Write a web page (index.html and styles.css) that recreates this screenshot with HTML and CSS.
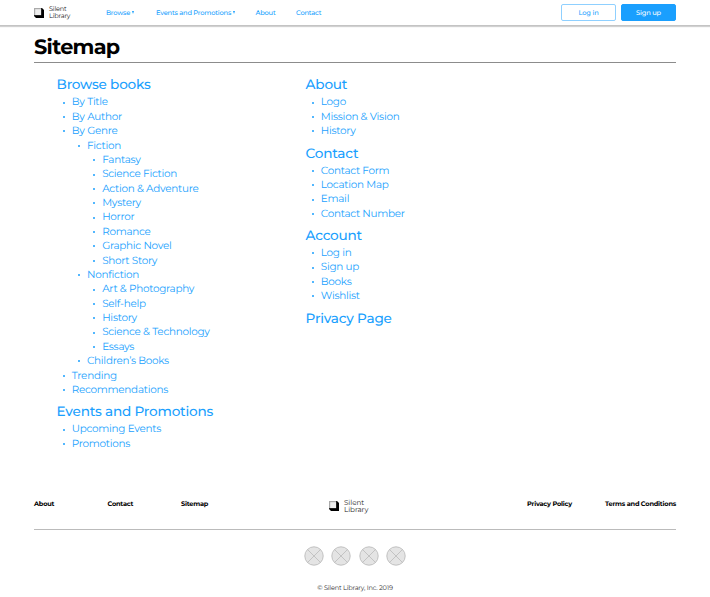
FILE: index.html
```html
<!DOCTYPE html>
<html lang="en">
<head>
<meta charset="utf-8">
<title>Sitemap – Silent Library</title>
<link rel="stylesheet" href="styles.css">
</head>
<body>
<header class="topbar">
  <a class="brand">
    <svg class="mark" viewBox="0 0 10 10"><path d="M0 0H8L10 2V10H2L0 8Z" fill="#000"/><path d="M0 0H7.2V7.2H0Z" fill="#aaa"/><path d="M1.2 1.2H7V7H1.2Z" fill="#eee"/></svg>
    <span>Silent<br>Library</span>
  </a>
  <nav class="menu">
    <a class="browse">Browse <i class="caret"></i></a>
    <a class="events">Events and Promotions <i class="caret"></i></a>
    <a class="about">About</a>
    <a>Contact</a>
  </nav>
  <div class="actions">
    <a class="button">Log in</a>
    <a class="button primary">Sign up</a>
  </div>
</header>
<main>
  <h1>Sitemap</h1>
  <div class="columns">
    <div class="column">
      <h2>Browse books</h2>
      <ul>
        <li>By Title</li>
        <li>By Author</li>
        <li>By Genre
          <ul>
            <li>Fiction
              <ul>
                <li>Fantasy</li>
                <li>Science Fiction</li>
                <li>Action &amp; Adventure</li>
                <li>Mystery</li>
                <li>Horror</li>
                <li>Romance</li>
                <li>Graphic Novel</li>
                <li>Short Story</li>
              </ul>
            </li>
            <li>Nonfiction
              <ul>
                <li>Art &amp; Photography</li>
                <li>Self-help</li>
                <li>History</li>
                <li>Science &amp; Technology</li>
                <li>Essays</li>
              </ul>
            </li>
            <li>Children’s Books</li>
          </ul>
        </li>
        <li>Trending</li>
        <li>Recommendations</li>
      </ul>
      <h2>Events and Promotions</h2>
      <ul>
        <li>Upcoming Events</li>
        <li>Promotions</li>
      </ul>
    </div>
    <div class="column">
      <h2>About</h2>
      <ul>
        <li>Logo</li>
        <li>Mission &amp; Vision</li>
        <li>History</li>
      </ul>
      <h2>Contact</h2>
      <ul>
        <li>Contact Form</li>
        <li>Location Map</li>
        <li>Email</li>
        <li>Contact Number</li>
      </ul>
      <h2>Account</h2>
      <ul>
        <li>Log in</li>
        <li>Sign up</li>
        <li>Books</li>
        <li>Wishlist</li>
      </ul>
      <h2>Privacy Page</h2>
    </div>
  </div>
</main>
<footer>
  <div class="footer-row">
    <nav class="footer-left"><a>About</a><a>Contact</a><a>Sitemap</a></nav>
    <a class="brand footer-brand">
      <svg class="mark" viewBox="0 0 10 10"><path d="M0 0H8L10 2V10H2L0 8Z" fill="#000"/><path d="M0 0H7.2V7.2H0Z" fill="#aaa"/><path d="M1.2 1.2H7V7H1.2Z" fill="#eee"/></svg>
      <span>Silent<br>Library</span>
    </a>
    <nav class="footer-right"><a>Privacy Policy</a><a>Terms and Conditions</a></nav>
  </div>
  <div class="social">
    <svg viewBox="0 0 20 20"><circle cx="10" cy="10" r="9.2"/><path d="M3.5 3.5L16.5 16.5M16.5 3.5L3.5 16.5"/></svg>
    <svg viewBox="0 0 20 20"><circle cx="10" cy="10" r="9.2"/><path d="M3.5 3.5L16.5 16.5M16.5 3.5L3.5 16.5"/></svg>
    <svg viewBox="0 0 20 20"><circle cx="10" cy="10" r="9.2"/><path d="M3.5 3.5L16.5 16.5M16.5 3.5L3.5 16.5"/></svg>
    <svg viewBox="0 0 20 20"><circle cx="10" cy="10" r="9.2"/><path d="M3.5 3.5L16.5 16.5M16.5 3.5L3.5 16.5"/></svg>
  </div>
  <p class="copyright">© Silent Library, Inc. 2019</p>
</footer>
</body>
</html>
```
FILE: styles.css
```css
* { box-sizing: border-box; }
body {
  margin: 0;
  background: #fff;
  color: #000;
  font-family: Montserrat, Inter, sans-serif;
  text-rendering: geometricPrecision;
}
.topbar {
  display: flex;
  align-items: center;
  height: 26px;
  padding: 0 34px;
  border-bottom: 1px solid #c4c4c4;
  box-shadow: 0 1px 1px rgba(0, 0, 0, .18);
  white-space: nowrap;
}
.brand {
  display: flex;
  align-items: center;
  gap: 5px;
  width: 72px;
  font-size: 6.6px;
  line-height: 7px;
  letter-spacing: -.2px;
  color: #222;
}
.brand span { position: relative; top: .5px; }
.mark { width: 10px; height: 10px; flex: none; }
.menu {
  display: flex;
  flex: 1;
  color: #1a9ffe;
  font-size: 6.7px;
  line-height: 10px;
  letter-spacing: -.2px;
  font-weight: 500;
}
.menu a { display: flex; align-items: center; gap: 2px; }
.menu .browse { width: 50px; }
.menu .events { width: 99.5px; }
.menu .about { width: 40.5px; }
.caret {
  border: 1.5px solid transparent;
  border-top: 3px solid #1a9ffe;
  border-bottom: 0;
}
.actions { display: flex; gap: 5px; }
.button {
  width: 55px;
  height: 17px;
  border: 1px solid #8fd0ff;
  border-radius: 2px;
  color: #1a9ffe;
  font-size: 6.7px;
  font-weight: 500;
  line-height: 16px;
  letter-spacing: -.15px;
  text-align: center;
}
.button.primary { background: #1a9ffe; border-color: #1a9ffe; color: #fff; }
main { height: 462px; padding: 8px 34px 0; }
h1 {
  height: 29px;
  margin: 0;
  border-bottom: 1px solid #8c8c8c;
  font-size: 20.8px;
  font-weight: 700;
  line-height: 28.6px;
  letter-spacing: -.7px;
}
.columns { display: flex; padding: 12.4px 0 0 22.6px; color: #1a9ffe; }
.column { width: 249px; }
h2 {
  margin: 5px 0 0;
  font-size: 13.6px;
  font-weight: 500;
  line-height: 20px;
  letter-spacing: -.22px;
}
h2:first-child { margin-top: 0; }
ul {
  margin: 0;
  padding: 0 0 0 15.2px;
  list-style: none;
  font-size: 10.4px;
  line-height: 14.37px;
  letter-spacing: -.26px;
}
li::before {
  content: "";
  float: left;
  width: 2px;
  height: 2px;
  margin: 6.3px 0 0 -9px;
  border-radius: 50%;
  background: #1a9ffe;
}
.footer-row {
  display: flex;
  justify-content: space-between;
  height: 42px;
  margin: 0 34px;
  border-bottom: 1px solid #bbb;
  font-size: 6.6px;
  font-weight: 700;
  letter-spacing: -.22px;
  white-space: nowrap;
}
.footer-left, .footer-right { display: flex; line-height: 10px; padding-top: 11px; }
.footer-left { width: 295px; }
.footer-left a { width: 73.5px; }
.footer-right { width: 149px; justify-content: space-between; }
.footer-brand { flex: 1; width: auto; height: 14px; margin-top: 11px; font-size: 7.2px; line-height: 7.5px; font-weight: 400; letter-spacing: -.05px; }
.footer-brand span { top: 0; }
.social { display: flex; justify-content: center; gap: 7.2px; padding-top: 16px; }
.social svg { width: 20px; height: 20px; }
.social circle { fill: #e4e4e4; stroke: #bbb; stroke-width: .9; }
.social path { stroke: #b4b4b4; stroke-width: .7; }
.copyright {
  margin: 17px 0 0;
  font-size: 6.6px;
  line-height: 10px;
  letter-spacing: -.2px;
  text-align: center;
  color: #333;
}
```
